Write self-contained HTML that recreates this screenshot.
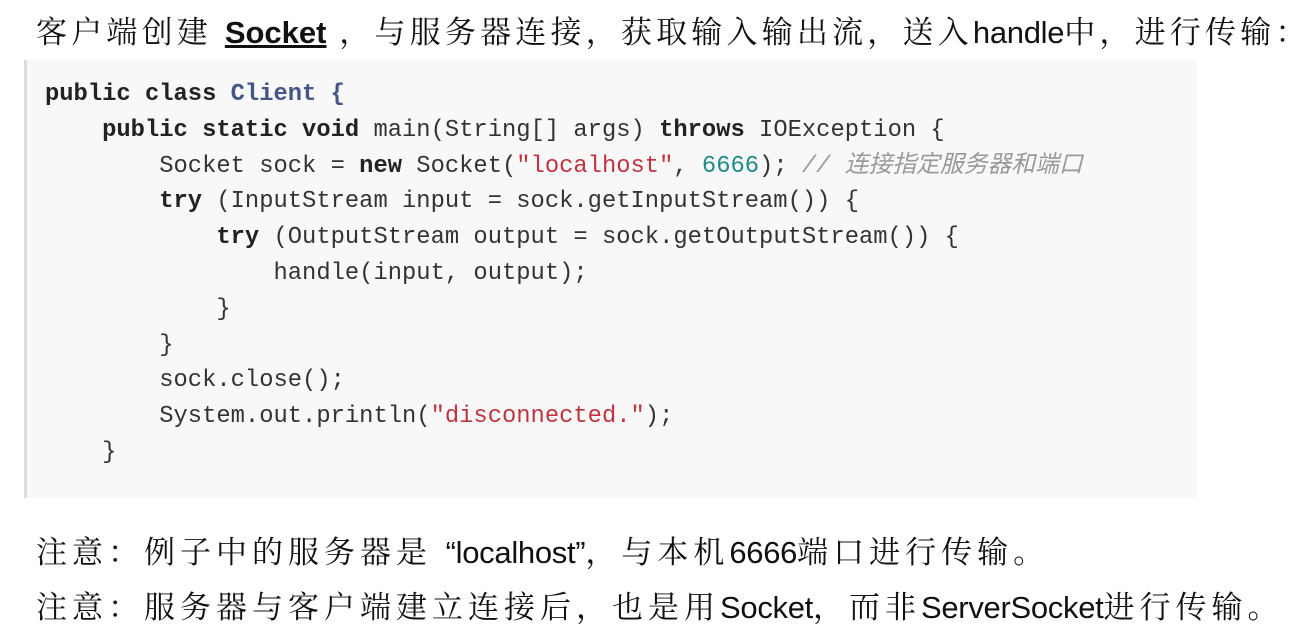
<!DOCTYPE html>
<html><head><meta charset="utf-8"><style>
html,body{margin:0;padding:0;background:#fff;width:1298px;height:628px;overflow:hidden}
.t{position:absolute;left:36px;font-family:"Liberation Sans","Noto Serif CJK SC",serif;font-size:31px;color:#111;white-space:nowrap;letter-spacing:4.2px}
.t b{font-family:"Liberation Sans",sans-serif;letter-spacing:0}
.t .l{font-family:"Liberation Sans",sans-serif;letter-spacing:-0.3px}
.code{position:absolute;left:24px;top:60px;width:1170px;height:438px;background:#f8f8f8;border-left:3px solid #ddd}
pre{margin:0;position:absolute;left:18px;top:17px;font-family:"Liberation Mono",monospace;font-size:23.8px;line-height:35.8px;color:#333}
.k{font-weight:bold;color:#222}
.c{font-weight:bold;color:#445588}
.s{color:#c0343f}
.n{color:#1f8a8a}
.m{color:#999;font-style:italic;font-family:"Liberation Mono","Noto Sans CJK SC",monospace}
</style></head><body>
<div class="t" style="top:7px">客户端创建 <b style="text-decoration:underline;font-size:31px">Socket</b> ，与服务器连接，获取输入输出流，送入<span class="l">handle</span>中，进行传输：</div>
<div class="code"><pre><span class="k">public class</span> <span class="c">Client {</span>
    <span class="k">public static void</span> main(String[] args) <span class="k">throws</span> IOException {
        Socket sock = <span class="k">new</span> Socket(<span class="s">"localhost"</span>, <span class="n">6666</span>); <span class="m">// 连接指定服务器和端口</span>
        <span class="k">try</span> (InputStream input = sock.getInputStream()) {
            <span class="k">try</span> (OutputStream output = sock.getOutputStream()) {
                handle(input, output);
            }
        }
        sock.close();
        System.out.println(<span class="s">"disconnected."</span>);
    }</pre></div>
<div class="t" style="top:527px;letter-spacing:5px">注意：例子中的服务器是 <span class="l">“localhost”</span>，与本机<span class="l">6666</span>端口进行传输。</div>
<div class="t" style="top:582px;letter-spacing:5px">注意：服务器与客户端建立连接后，也是用<span class="l">Socket</span>，而非<span class="l">ServerSocket</span>进行传输。</div>
</body></html>
